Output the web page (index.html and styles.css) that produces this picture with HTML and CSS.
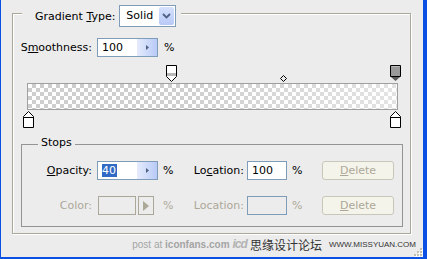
FILE: index.html
```html
<!DOCTYPE html>
<html>
<head>
<meta charset="utf-8">
<link rel="stylesheet" href="styles.css">
</head>
<body>
<div class="window">
  <div class="group">
    <div class="legend">
      <span>Gradient <u>T</u>ype:</span>
      <div class="select">
        <span class="select-text">Solid</span>
        <span class="select-btn"><svg width="9" height="6" viewBox="0 0 9 6"><path d="M1 1l3.5 3.5L8 1" fill="none" stroke="#4D6185" stroke-width="1.8"/></svg></span>
      </div>
    </div>

    <div class="row">
      <span class="row-label">S<u>m</u>oothness:</span>
      <div class="field">
        <span class="field-text">100</span>
        <span class="spin"><svg width="3" height="5" viewBox="0 0 3 5"><path d="M0 0l3 2.5L0 5z" fill="#4D6185"/></svg></span>
      </div>
      <span class="pct">%</span>
    </div>

    <div class="gradient">
      <svg class="marker m-top1" width="11" height="17" viewBox="0 0 11 17"><path d="M.5 .5h10v11l-5 5-5-5z" fill="#fff" stroke="#000"/><rect x="1" y="8" width="9" height="3" fill="#b8b8b8"/></svg>
      <svg class="marker m-mid" width="7" height="7" viewBox="0 0 7 7"><path d="M3.5 .5l3 3-3 3-3-3z" fill="none" stroke="#000"/></svg>
      <svg class="marker m-top2" width="11" height="16" viewBox="0 0 11 16"><path d="M.5 .5h10v11h-10z" fill="#9a9a9a" stroke="#000"/><path d="M1.5 1.5h8" stroke="#bcbcbc"/><path d="M1 12h9l-4.5 4z" fill="#5a5a5a"/></svg>
      <div class="bar"></div>
      <svg class="marker m-bot1" width="11" height="17" viewBox="0 0 11 17"><path d="M.5 5.5l5-5 5 5v11h-10z" fill="#fff" stroke="#000"/><path d="M.5 6.5h10" stroke="#000"/></svg>
      <svg class="marker m-bot2" width="11" height="17" viewBox="0 0 11 17"><path d="M.5 5.5l5-5 5 5v11h-10z" fill="#fff" stroke="#000"/><path d="M.5 6.5h10" stroke="#000"/></svg>
    </div>

    <div class="stops">
      <div class="stops-legend">Stops</div>
      <div class="stops-grid">
        <span class="cell-label"><u>O</u>pacity:</span>
        <div class="field">
          <span class="field-text"><span class="hl">40</span></span>
          <span class="spin"><svg width="3" height="5" viewBox="0 0 3 5"><path d="M0 0l3 2.5L0 5z" fill="#4D6185"/></svg></span>
        </div>
        <span class="pct2">%</span>
        <span class="cell-label2">Lo<u>c</u>ation:</span>
        <div class="field small"><span class="field-text">100</span></div>
        <span class="pct2">%</span>
        <div class="btn"><span><u>D</u>elete</span></div>

        <span class="cell-label dis">Color:</span>
        <div class="swatch-wrap">
          <span class="swatch"></span>
          <span class="arrow-btn"><svg width="6" height="10" viewBox="0 0 6 10"><path d="M0 0l6 5-6 5z" fill="#ACA899"/></svg></span>
        </div>
        <span class="pct2 dis">%</span>
        <span class="cell-label2 dis">Location:</span>
        <div class="field small off"></div>
        <span class="pct2 dis">%</span>
        <div class="btn"><span><u>D</u>elete</span></div>
      </div>
    </div>
  </div>

  <div class="footer">
    <span class="wm">post at <b>iconfans.com</b></span>
    <span class="logo">icd</span>
    <span class="cjk">思缘设计论坛</span>
    <span class="url">WWW.MISSYUAN.COM</span>
  </div>

  <svg class="grip" width="10" height="10" viewBox="0 0 10 10">
    <g fill="#fff"><rect x="8" y="2" width="2" height="2"/><rect x="5" y="5" width="2" height="2"/><rect x="8" y="5" width="2" height="2"/><rect x="2" y="8" width="2" height="2"/><rect x="5" y="8" width="2" height="2"/><rect x="8" y="8" width="2" height="2"/></g>
    <g fill="#C3BFB1"><rect x="7" y="1" width="2" height="2"/><rect x="4" y="4" width="2" height="2"/><rect x="7" y="4" width="2" height="2"/><rect x="1" y="7" width="2" height="2"/><rect x="4" y="7" width="2" height="2"/><rect x="7" y="7" width="2" height="2"/></g>
  </svg>
</div>
</body>
</html>
```

FILE: styles.css
```css
* { box-sizing: border-box; }

body {
  margin: 0;
  background: #ECECEC;
  font-family: "DejaVu Sans", "Noto Sans", sans-serif;
  font-size: 11px;
  color: #000;
}

u { text-underline-offset: 1px; }

.window {
  position: relative;
  width: 427px;
  height: 259px;
  background: #ECECEC;
  border-left: 1px solid #0C4FE4;
  border-right: 4px solid #0C4FE4;
  border-bottom: 2px solid #0C4FE4;
  padding: 13px 0 0 11px;
}

.group {
  width: 399px;
  height: 221px;
  border: 1px solid #ACA899;
  box-shadow: inset 1px 1px 0 #fff, 1px 1px 0 #fff;
}

.legend {
  display: flex;
  align-items: center;
  gap: 4px;
  width: max-content;
  height: 22px;
  margin: -9px 0 0 9px;
  padding: 0 5px 0 13px;
  background: #ECECEC;
}

.select {
  display: flex;
  width: 57px;
  height: 22px;
  border: 1px solid #7F9DB9;
  background: #fff;
}

.select-text {
  flex: 1;
  padding-left: 6px;
  line-height: 20px;
}

.select-btn {
  display: flex;
  align-items: center;
  justify-content: center;
  width: 15px;
  height: 18px;
  margin: 1px;
  border-radius: 2px;
  background: linear-gradient(#D6E1FD, #B7C9F6);
}

.row {
  display: flex;
  align-items: center;
  height: 19px;
  margin-top: 11px;
}

.row-label {
  width: 84px;
  padding-right: 5px;
  text-align: right;
}

.field {
  display: flex;
  width: 61px;
  height: 19px;
  border: 1px solid #7F9DB9;
  background: #fff;
}

.field.small { width: 40px; }
.field.off { background: transparent; }

.field-text {
  flex: 1;
  padding-left: 4px;
  line-height: 17px;
}

.hl {
  display: inline-block;
  background: #316AC5;
  color: #fff;
  line-height: 13px;
  padding: 0 1px 0 0;
}

.spin {
  display: flex;
  align-items: center;
  justify-content: center;
  width: 20px;
  background: linear-gradient(to right, #E6ECFD, #B8CAF7);
}

.pct { padding-left: 6px; }

.gradient {
  position: relative;
  width: 371px;
  height: 62px;
  margin: 8px 0 0 14px;
  padding-top: 18px;
}

.bar {
  height: 27px;
  border: 1px solid #A0A0A0;
  background:
    linear-gradient(to right, rgba(255,255,255,0.1), rgba(255,255,255,0.1) 40%, rgba(255,255,255,0.5)),
    repeating-conic-gradient(#C8C8C8 0 25%, #FFFFFF 0 50%) 0 0 / 8px 8px;
}

.marker { position: absolute; display: block; }
.m-top1 { left: 139px; top: 0; }
.m-top2 { left: 363px; top: 0; }
.m-mid { left: 253px; top: 10px; }
.m-bot1 { left: -4px; top: 46px; }
.m-bot2 { left: 363px; top: 46px; }

.stops {
  width: 382px;
  height: 83px;
  margin: 17px 0 0 8px;
  border: 1px solid #949494;
}

.stops-legend {
  width: max-content;
  height: 14px;
  line-height: 14px;
  margin: -9px 0 0 16px;
  padding: 0 3px;
  background: #ECECEC;
}

.stops-grid {
  display: grid;
  grid-template-columns: 75px 61px 30px 59px 40px 35px 72px;
  grid-template-rows: 19px 19px;
  row-gap: 16px;
  align-items: center;
  margin-top: 11px;
}

.cell-label { text-align: right; padding-right: 5px; }
.cell-label2 { text-align: right; padding-right: 3px; }
.pct2 { padding-left: 5px; }
.dis { color: #ACA899; }

.btn {
  display: flex;
  align-items: center;
  justify-content: center;
  height: 19px;
  border: 1px solid #C9C7BA;
  border-radius: 3px;
  background: #F5F4EA;
  color: #ACA899;
}

.swatch-wrap {
  display: flex;
  gap: 2px;
  padding-left: 1px;
}

.swatch {
  width: 38px;
  height: 19px;
  border: 1px solid #ACA899;
}

.arrow-btn {
  display: flex;
  align-items: center;
  justify-content: center;
  width: 16px;
  height: 19px;
  border: 1px solid #ACA899;
}

.footer {
  display: flex;
  justify-content: flex-end;
  align-items: center;
  height: 20px;
  padding-right: 7px;
}

.wm {
  font-family: "Liberation Sans", Arial, sans-serif;
  font-size: 10px;
  color: #A4A4A4;
}

.logo {
  margin-left: 3px;
  font-family: "Liberation Sans", Arial, sans-serif;
  font-size: 12px;
  font-weight: bold;
  font-style: italic;
  color: #B4B4B4;
  letter-spacing: -1px;
}

.cjk {
  margin-left: 3px;
  font-family: "Noto Sans CJK SC", sans-serif;
  font-size: 12px;
  color: #333;
}

.url {
  margin-left: 7px;
  font-family: "Liberation Sans", Arial, sans-serif;
  font-size: 8px;
  color: #333;
}

.grip {
  position: absolute;
  right: 0;
  bottom: 0;
}
```
